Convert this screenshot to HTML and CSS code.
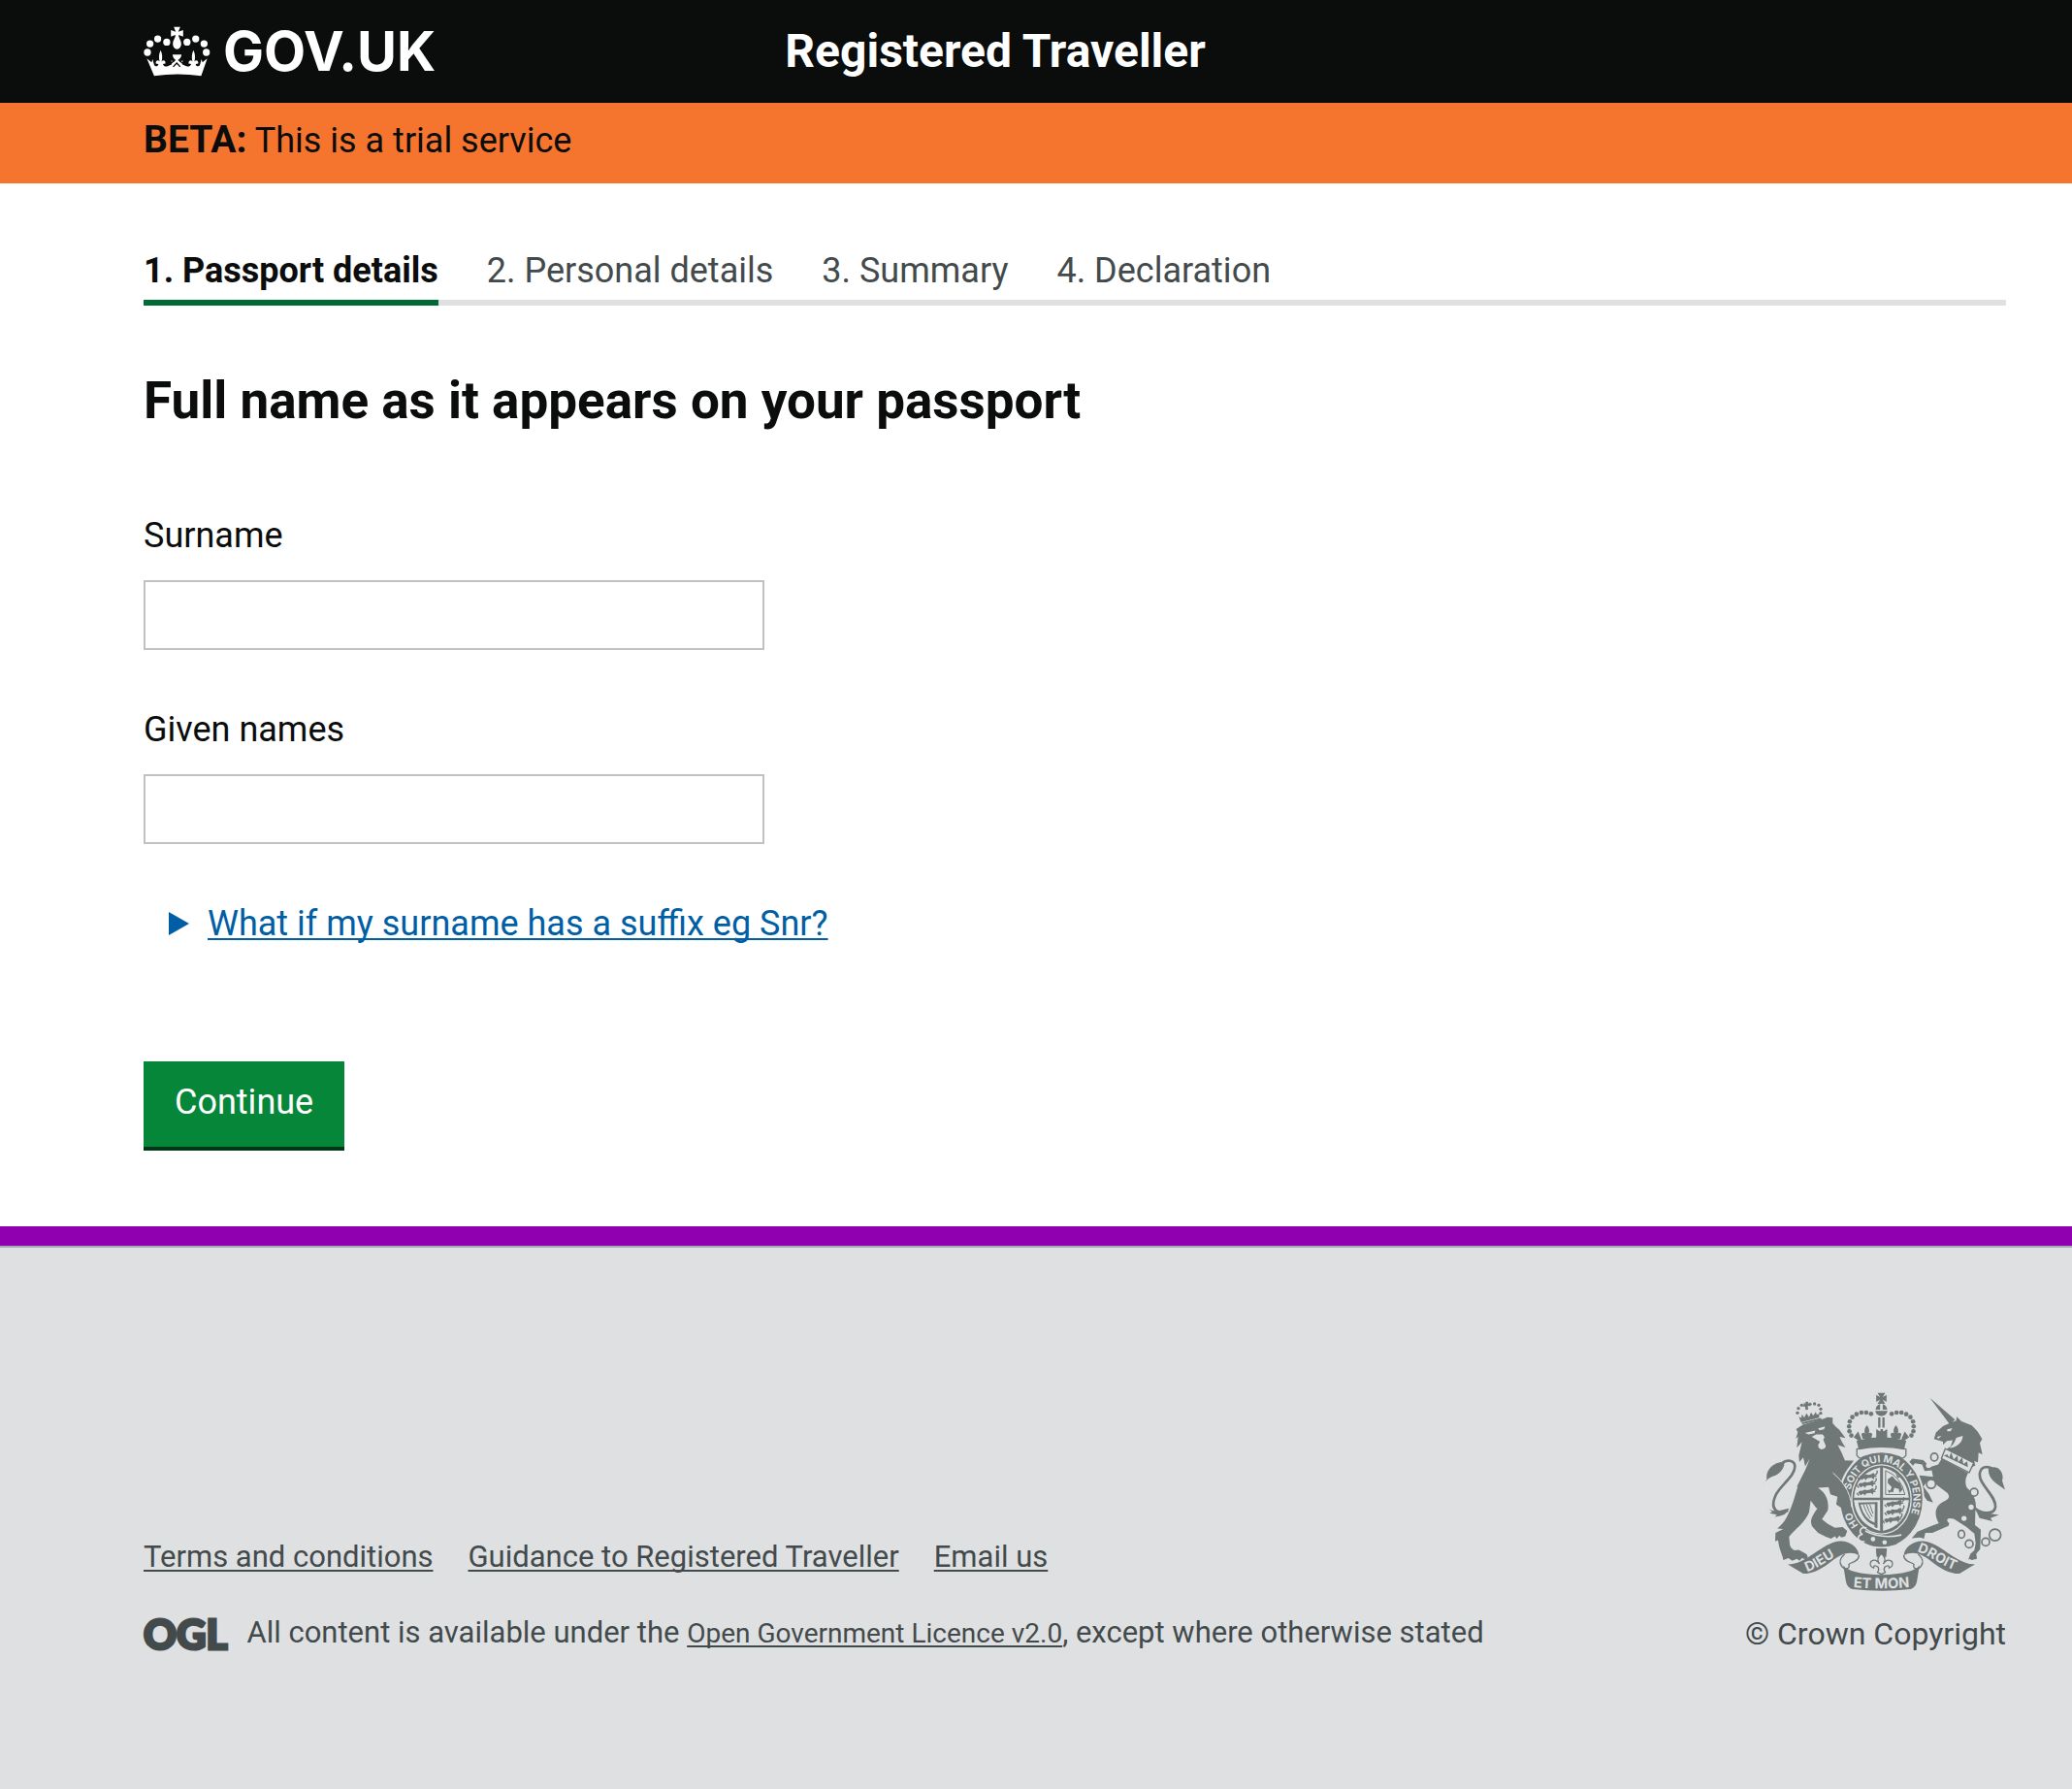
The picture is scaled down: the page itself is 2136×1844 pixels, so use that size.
FILE: index.html
```html
<!DOCTYPE html>
<html lang="en">
<head>
<meta charset="utf-8">
<meta name="viewport" content="width=device-width, initial-scale=1">
<title>Registered Traveller</title>
<link rel="stylesheet" href="styles.css">
</head>
<body>
<header class="header">
  <a class="logo" href="#">
    <svg class="logo-crown" viewBox="55 76 208 156" aria-hidden="true">
      <g fill="#fff">
        <circle cx="67" cy="157" r="11"/><circle cx="75" cy="130" r="11"/><circle cx="99" cy="115" r="11"/><circle cx="127" cy="125" r="11"/>
        <circle cx="190" cy="125" r="11"/><circle cx="217" cy="115" r="11"/><circle cx="243" cy="130" r="11"/><circle cx="250" cy="157" r="11"/>
        <path d="M149 78h20l-6 15 15-5v20l-14-5c-1 8 8 16 8 28 0 9-6 16-13 16s-13-7-13-16c0-12 9-20 8-28l-14 5V88l15 5z"/>
        <path d="M65 176l15 12 3-10 5 18c5 7 12 5 13-3l-8-1c-1-10 8-13 12-6-3-12-3-24 3-36 6 12 6 24 3 36 4-7 13-4 12 6l-8 1c2 8 12 10 20 5l8-4-2-12 8 4 2 2-6-24h28l-6 24 2-2 8-4-2 12 8 4c8 5 18 3 20-5l-8-1c-1-10 8-13 12-6-3-12-3-24 3-36 6 12 6 24 3 36 4-7 13-4 12 6l-8 1c1 8 8 10 13 3l5-18 3 10 15-12-19 54q-73-10-146 0z"/>
      </g>
      <path d="M136 166l16 15-16 14M181 166l-16 15 16 14M147 202l11-12 11 12" fill="none" stroke="#0b0c0c" stroke-width="4"/>
    </svg>
    <span class="logo-text">GOV.UK</span>
  </a>
  <p class="service-name">Registered Traveller</p>
</header>

<div class="phase"><p class="phase-text"><strong class="phase-tag">BETA:</strong> This is a trial service</p></div>

<main class="main">
  <ol class="steps">
    <li class="step step-current" aria-current="step">1. Passport details</li>
    <li class="step">2. Personal details</li>
    <li class="step">3. Summary</li>
    <li class="step">4. Declaration</li>
  </ol>
  <h1 class="title">Full name as it appears on your passport</h1>
  <form class="form">
    <div class="field">
      <label class="label" for="surname">Surname</label>
      <input class="input" id="surname" name="surname" type="text">
    </div>
    <div class="field">
      <label class="label" for="given-names">Given names</label>
      <input class="input" id="given-names" name="given-names" type="text">
    </div>
    <details class="help">
      <summary class="help-summary"><svg class="help-arrow" viewBox="0 0 21 24" aria-hidden="true"><path d="M0 0l21 12L0 24z" fill="#005ea5"/></svg><span class="help-text">What if my surname has a suffix eg Snr?</span></summary>
    </details>
    <button class="button" type="submit">Continue</button>
  </form>
</main>

<footer class="footer">
  <div class="footer-meta">
    <nav class="footer-links">
      <a class="footer-link" href="#">Terms and conditions</a>
      <a class="footer-link" href="#">Guidance to Registered Traveller</a>
      <a class="footer-link" href="#">Email us</a>
    </nav>
    <div class="licence">
      <span class="ogl">OGL</span>
      <p class="licence-text">All content is available under the <a class="licence-link" href="#">Open Government Licence v2.0</a>, except where otherwise stated</p>
    </div>
  </div>
  <div class="copyright">
    <svg class="crest" viewBox="113 70 752 616" aria-hidden="true">
      <defs>
        <path id="motto" d="M480 517A99 115 0 0 1 480 287A99 115 0 0 1 480 517"/>
        <path id="dieu" d="M250 626C290 614 320 584 366 566"/>
        <path id="droit" d="M590 564C630 574 668 612 724 626"/>
        <path id="etmon" d="M385 673Q480 683 575 673"/>
        <g id="lions">
          <path d="M-30-3q5-9 12-5l8-4q14 4 22-4 8-2 6 6l8 4-9 2-2 8-5-6-14 1-6 7-4-6-8 5z"/>
          <path d="M-28 6l-6-8M20-10q10-10 4-14" fill="none" stroke="#6f7777" stroke-width="4"/>
        </g>
      </defs>
      <g fill="#6f7777">
        <!-- lion -->
        <circle cx="220" cy="134" r="5"/><circle cx="223" cy="120" r="5"/><circle cx="233" cy="110" r="5"/><circle cx="259" cy="107" r="5"/><circle cx="273" cy="106" r="5"/><circle cx="286" cy="110" r="5"/><circle cx="292" cy="122" r="5"/><circle cx="292" cy="135" r="5"/>
        <path d="M240 103l6 3-2-6 9-1 0 6 5 0 1 8-7-1 1 12-8 1-1-11-6 2zM224 146l8 4 2-12 7 11 7-14 8 12 6-15 7 11 8-12 3 9 8-4-1 13-56 14z"/>
        <path d="M233 164l60-14 2 6-60 13z"/>
        <path d="M216 184l22-14 62-17 13-6 16 2v17q10 12 20 20l20 26-18-4q4 14 18 33l-24-7 12 24 14 33 16-6-10 18 4 60-50-30-40 30H218C226 345 245 315 258 276l-14 24-6-28-12 14-2-20 10-42-16 18 4-34-7 6 6-20z"/>
        <path d="M262 280C245 315 226 345 218 372 210 400 200 435 184 462c-8 14-20 24-26 30l18 2-24 12-1 26 9-4c2 20 8 34 14 52l2 10 16-6 12 8 14-6 8 6 8-8 14 4q8-10-2-18l-22-12-14 2q-14-8-14-22l-2-20c18-24 50-44 62-76l5-36 17 22 4 2c-16 22-26 40-16 56l18 20 24 12 16 6 12-8 6 8 8-10 6 6 12-4 6-16-14-12-24 2-22-12-18-14 18-28c4-20-2-44-16-58l-14-12 60-4 50-80z"/>
        <path d="M190 436c-28 14-58 0-38-46 14-32 62-60 60-92-2-18-26-20-40-8" fill="none" stroke="#6f7777" stroke-width="8"/>
        <path d="M113 360l12-20c-4-24 14-52 54-55 3 18-13 40-34 45-18 6-26 18-32 30zM128 428q16 14 40 8l26-6q-6 24-44 26l6-7-22-4 8-5z"/>
        <!-- unicorn -->
        <path d="M630 87l78 68-16 15zM643 215l6-20 22-20 20-9 21-8 1-12 15 14 32 13 18 19 14 23-7 13 8 35-12-6-2 30-12-4 4 14-24 12-78-36 10-24 16-12 6-18-18 2-12 12v-10z"/>
        <path d="M667 276l82 44c-8 14-12 30-4 46 22 20 32 44 26 74l-1 42 18 14-2 60-12 14 2 16-16 4-8-4-4 6 8-22 12-10 4-22-4-30-24-20-40-26c-24-6-24 6-14 14l-2 8-50 22-22 0-4 18-12-4-26 2 18-20 44-18 22-8c-16-26-12-54 12-66 20-8 24-16 14-28l-34-26-30-8-10 14 18 24 12 26-18-6-22-30-20-30 20-18 40 4-4-20-22 2-8-20-22-4-10 12-14-10 16-16 34 4 20 22 26-8z"/>
        <path d="M768 428c24 22 62 20 65-2 4-36-54-70-48-106 4-20 26-24 42-10" fill="none" stroke="#6f7777" stroke-width="8"/>
        <path d="M812 306c30-14 50 14 42 38l9 28-22-16c-20-12-32-32-29-50zM770 430l20 12 54 8-26 10 6 10-40-10z"/>
      </g>
      <g fill="none" stroke="#6f7777" stroke-width="5">
        <ellipse cx="644" cy="271" rx="11" ry="12"/><ellipse cx="728" cy="510" rx="10" ry="12"/><circle cx="752" cy="540" r="12"/><circle cx="803" cy="534" r="12"/><circle cx="832" cy="512" r="18"/><circle cx="767" cy="380" r="12" fill="#dee0e2"/>
      </g>
      <g fill="#dee0e2">
        <path d="M243 196l32-7-2 8-18 4zM284 182l22-6-4 9-14 3zM264 208l14-7 20 0 6 8-4 8 8 20q-2 10-14 10-10-2-10-14l6-10-8-4-6-4z"/>
        <circle cx="758" cy="426" r="8"/><circle cx="736" cy="461" r="8"/><circle cx="626" cy="297" r="8"/>
        <path d="M684 185l16-4-6 10h-10zM732 205c0 22-20 36-42 38 14-10 18-22 22-32zM652 208l14-3-10 9z"/>
        <circle cx="634" cy="354" r="14" stroke="#6f7777" stroke-width="5"/>
        <path d="M678 245l88 44-14 30-86-44z" stroke="#6f7777" stroke-width="4"/>
      </g>
      <path d="M674 266l10-4 6 10 6-16 8 22 12-12 2 20 12-14 4 20 12-8 2 18-80-38z" fill="#6f7777"/>
      <!-- garter and shield -->
      <ellipse cx="480" cy="402" rx="130" ry="150" fill="#6f7777" stroke="#dee0e2" stroke-width="6"/>
      <ellipse cx="480" cy="402" rx="92" ry="107" fill="#6f7777" stroke="#dee0e2" stroke-width="4"/>
      <path d="M476 303v94h-81q4-74 81-94zM485 303q72 20 80 94h-80zM476 404v96q-74-22-81-96zM485 404h80q-6 76-80 96z" fill="#dee0e2"/>
      <path d="M493 313q48 18 60 74h-60z" fill="none" stroke="#6f7777" stroke-width="3"/>
      <g fill="#6f7777">
        <use href="#lions" x="441" y="337"/><use href="#lions" x="438" y="360"/><use href="#lions" x="438" y="384"/>
        <use href="#lions" x="524" y="420"/><use href="#lions" x="524" y="445"/><use href="#lions" x="518" y="470"/>
        <path d="M500 340l14-10 10 12 14 10 8 20-10 10-2-12-14-4-4 14-10-2 6-14-12-12zM500 372l10 4-6 8zM524 322l14 12-8 2z"/>
        <path d="M408 412l60-2v80q-10 2-10-8-38-12-50-70zm7 6q12 46 44 56l1-58z"/>
      </g>
      <path d="M424 418q8 24 22 44M434 418q6 20 18 38M444 418l10 28" fill="none" stroke="#6f7777" stroke-width="3"/>
      <g font-family="Inter, sans-serif" font-weight="700" fill="#dee0e2" font-size="31">
        <text><textPath href="#motto" startOffset="82">HO</textPath></text>
        <text><textPath href="#motto" startOffset="197">SOIT QUI MAL Y PENSE</textPath></text>
      </g>
      <path d="M330 318c26 24 50 54 56 108l-12 4-10-10-8 8-16-10 4-24-22-8-6-24z" fill="#6f7777"/>
      <path d="M330 320c26 22 54 54 58 106" fill="none" stroke="#dee0e2" stroke-width="3"/>
      <path d="M412 500q60 34 134 14l-20 28q-70 14-120-20z" fill="#6f7777"/>
      <path d="M430 500q50 26 112 12M434 490q-18-4-20 10 0 10 8 10-14 2-14 14 4 12 20 8" fill="none" stroke="#dee0e2" stroke-width="5"/>
      <circle cx="454" cy="525" r="7" fill="#dee0e2"/><circle cx="490" cy="535" r="7" fill="#dee0e2"/>
      <!-- royal crown -->
      <path d="M404 246q76-22 152 0v20q-10 14-20 4-56-22-112 0-10 10-20-4z" fill="#dee0e2" stroke="#6f7777" stroke-width="4"/>
      <g fill="#6f7777">
        <path d="M403 220q77-22 154 0l-7 28q-70-14-140 0zM468 72h24l-8 13 12-7v22l-12-7 8 13h-24l8-13-12 7V78l12 7zM461 128h38q-2 14-19 16-17-2-19-16zM462 124q2-14 14-17v17zM484 107q12 3 14 17h-14z"/>
        <path d="M470 148h7v32h-7zM483 148h7v32h-7zM464 184l12 8 2-8h6l2 8 12-8v28h-34zM435 172q12 14 5 26 8-6 12 2l-4 14h-26l-4-14q4-8 12-2-7-12 5-26zM525 172q12 14 5 26 8-6 12 2l-4 14h-26l-4-14q4-8 12-2-7-12 5-26zM394 210l14-18 10 24-6 6zM566 210l-14-18-10 24 6 6z"/>
        <circle cx="387" cy="204" r="7"/><circle cx="381" cy="191" r="7"/><circle cx="380" cy="176" r="7"/><circle cx="382" cy="161" r="7"/><circle cx="390" cy="147" r="7"/><circle cx="403" cy="138" r="7"/><circle cx="418" cy="133" r="7"/><circle cx="433" cy="133" r="7"/><circle cx="448" cy="137" r="7"/>
        <circle cx="573" cy="204" r="7"/><circle cx="579" cy="191" r="7"/><circle cx="580" cy="176" r="7"/><circle cx="578" cy="161" r="7"/><circle cx="570" cy="147" r="7"/><circle cx="557" cy="138" r="7"/><circle cx="542" cy="133" r="7"/><circle cx="527" cy="133" r="7"/><circle cx="512" cy="137" r="7"/>
        <!-- fleur-de-lis badge -->
        <path d="M463 554h34l-2 26h-30z"/>
        <!-- ribbon -->
        <path d="M190 603c60 0 104-66 160-72 32-2 60 20 60 44q-20-12-46-4c-40 14-70 62-126 61zM770 603c-60 0-104-66-160-72-32-2-60 20-60 44q20-12 46-4c40 14 70 62 126 61z"/>
        <path d="M362 606q18 26 118 30 100-4 118-30l-8 50q-4 20-20 24-86 10-180 0-16-4-20-24z"/>
      </g>
      <path d="M410 574c4 16-18 22-30 28M366 572c-16 14-18 26-8 38 12 14 28 4 20-8M550 574c-4 16 18 22 30 28M594 572c16 14 18 26 8 38-12 14-28 4-20-8" fill="none" stroke="#6f7777" stroke-width="4"/>
      <path d="M480 570q18 14 6 32 10-18 26-8 8 14-8 20 0-12-14-2l-2 8 4 8-12 6-12-6 4-8-2-8q-14-10-14 2-16-6-8-20 16-10 26 8-12-18 6-32z" fill="#dee0e2" stroke="#6f7777" stroke-width="4"/>
      <g font-family="Inter, sans-serif" font-weight="700" fill="#dee0e2" font-size="42">
        <text><textPath href="#dieu">DIEU</textPath></text>
        <text><textPath href="#droit">DROIT</textPath></text>
        <text font-size="44" text-anchor="middle"><textPath href="#etmon" startOffset="50%">ET MON</textPath></text>
      </g>
    </svg>
    <small class="copyright-text">© Crown Copyright</small>
  </div>
</footer>
</body>
</html>
```
FILE: styles.css
```css
* { box-sizing: border-box; }

body {
  margin: 0;
  min-height: 100vh;
  display: flex;
  flex-direction: column;
  background: #fff;
  color: #0b0c0c;
  font-family: Roboto, Arial, sans-serif;
  font-size: 36px;
  line-height: 40px;
}

p, h1, ol { margin: 0; padding: 0; }

.header, .phase, .main, .footer { padding-left: 148px; padding-right: 68px; }

.header {
  display: grid;
  grid-template-columns: 1fr 2fr;
  column-gap: 32px;
  align-items: center;
  padding-top: 18px;
  padding-bottom: 18px;
  background: #0b0c0c;
  color: #fff;
}
.logo { display: flex; align-items: center; gap: 13px; color: #fff; text-decoration: none; }
.logo-crown { width: 69px; height: 52px; }
.logo-text { font-family: Inter, Arial, sans-serif; font-size: 56px; font-weight: 700; line-height: 70px; }
.service-name { font-size: 48px; font-weight: 700; }

.phase { padding-top: 16px; padding-bottom: 22px; background: #f5752e; }
.phase-text { line-height: 44px; }
.phase-tag { font-size: 39px; }

.main { padding-top: 70px; padding-bottom: 82px; border-bottom: 20px solid #9100b0; }

.steps {
  display: flex;
  gap: 50px;
  list-style: none;
  border-bottom: 6px solid #dee0e2;
  color: #434a4c;
}
.step { padding-bottom: 10px; }
.step-current {
  margin-bottom: -6px;
  border-bottom: 6px solid #006b36;
  color: #0b0c0c;
  font-weight: 700;
}

.title { margin-top: 68px; font-size: 53px; line-height: 60px; font-weight: 700; }

.form { display: flex; flex-direction: column; align-items: flex-start; gap: 62px; margin-top: 89px; }
.field { display: flex; flex-direction: column; gap: 26px; width: 640px; max-width: 100%; }
.input {
  width: 100%;
  height: 72px;
  padding: 8px;
  border: 2px solid #bfc1c3;
  border-radius: 0;
  background: #fff;
  font: inherit;
}

.help-summary { display: flex; align-items: center; gap: 19px; padding-left: 26px; list-style: none; color: #005ea5; cursor: pointer; }
.help-arrow { width: 21px; height: 24px; }
.help-text, .footer-link, .licence-link {
  text-decoration: underline;
  text-decoration-thickness: 2px;
  text-decoration-skip-ink: none;
  text-underline-offset: 3px;
}

.button {
  margin-top: 60px;
  padding: 22px 32px 26px;
  border: 0;
  background: #058638;
  box-shadow: 0 4px 0 #003618;
  color: #fff;
  font: inherit;
}

.footer {
  flex: 1;
  display: flex;
  justify-content: space-between;
  align-items: flex-end;
  gap: 40px;
  padding-top: 130px;
  padding-bottom: 140px;
  border-top: 2px solid #a1acb2;
  background: #dee0e2;
  color: #434a4c;
  font-size: 31px;
}
.footer-meta { display: flex; flex-direction: column; gap: 38px; }
.footer-links { display: flex; gap: 36px; }
.footer-link, .licence-link { color: inherit; }
.licence { display: flex; align-items: center; gap: 20px; }
.ogl { font-family: Lato, sans-serif; font-size: 42px; font-weight: 900; line-height: 36px; -webkit-text-stroke: 3px currentColor; }
.licence-link { font-size: 28px; }
.copyright { display: flex; flex-direction: column; align-items: flex-end; gap: 24px; }
.crest { width: 251px; height: 205px; }
.copyright-text { font-size: 32px; }
```
